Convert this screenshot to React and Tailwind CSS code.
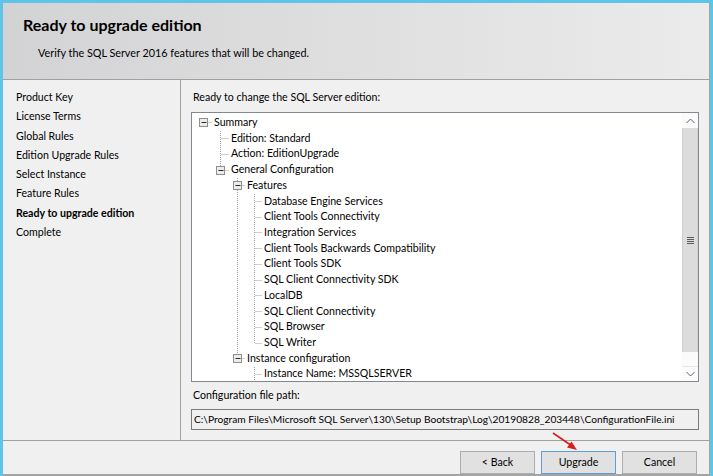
import React from 'react';

const rows = [
  { t: 'Summary', l: 0, e: true },
  { t: 'Edition: Standard', l: 1 },
  { t: 'Action: EditionUpgrade', l: 1 },
  { t: 'General Configuration', l: 1, e: true },
  { t: 'Features', l: 2, e: true },
  { t: 'Database Engine Services', l: 3 },
  { t: 'Client Tools Connectivity', l: 3 },
  { t: 'Integration Services', l: 3 },
  { t: 'Client Tools Backwards Compatibility', l: 3 },
  { t: 'Client Tools SDK', l: 3 },
  { t: 'SQL Client Connectivity SDK', l: 3 },
  { t: 'LocalDB', l: 3 },
  { t: 'SQL Client Connectivity', l: 3 },
  { t: 'SQL Browser', l: 3 },
  { t: 'SQL Writer', l: 3 },
  { t: 'Instance configuration', l: 2, e: true },
  { t: 'Instance Name: MSSQLSERVER', l: 3 },
];

const textPad = ['pl-[22px]', 'pl-[39px]', 'pl-[55px]', 'pl-[72px]'];
const TX = [22, 39, 55, 72];
const H = 15.73;
const TOP = 2;
const cy = (i) => Math.floor(TOP + H * i + H / 2) + 0.5;
const rowTop = (i) => Math.round(TOP + H * i);
const lx = (L) => 11.5 + 17 * L;

const navItems = [
  'Product Key',
  'License Terms',
  'Global Rules',
  'Edition Upgrade Rules',
  'Select Instance',
  'Feature Rules',
  'Ready to upgrade edition',
  'Complete',
];

function TreeLines() {
  const dot = { stroke: '#a0a0a0', strokeWidth: 1, strokeDasharray: '1 1', fill: 'none' };
  const verticals = [
    { x: lx(1), y1: rowTop(1), y2: cy(3) },
    { x: lx(2), y1: rowTop(4), y2: cy(15) },
    { x: lx(3), y1: rowTop(5), y2: cy(14) },
    { x: lx(3), y1: rowTop(16), y2: 268 },
  ];
  return (
    <svg className="absolute left-0 top-0" width="489" height="268" viewBox="0 0 489 268">
      {verticals.map((v, k) => (
        <line key={'v' + k} x1={v.x} y1={v.y1} x2={v.x} y2={v.y2} {...dot} />
      ))}
      {rows.map((r, i) => {
        const x0 = r.e ? lx(r.l) + 5 : lx(r.l) + 1;
        return <line key={'h' + i} x1={x0} y1={cy(i)} x2={TX[r.l] - 2} y2={cy(i)} {...dot} />;
      })}
      {rows.map((r, i) =>
        r.e ? (
          <g key={'b' + i}>
            <rect x={lx(r.l) - 4} y={cy(i) - 4} width="8" height="8" fill="#ececec" stroke="#8f8f8f" strokeWidth="1" />
            <line x1={lx(r.l) - 2} y1={cy(i)} x2={lx(r.l) + 3} y2={cy(i)} stroke="#2a2a2a" strokeWidth="1" />
          </g>
        ) : null
      )}
    </svg>
  );
}

function ScrollBar() {
  return (
    <div className="flex w-[16px] shrink-0 flex-col bg-[#fbfbfb]">
      <div className="flex h-[15px] items-center justify-center">
        <svg width="9" height="6" viewBox="0 0 9 6">
          <polyline points="0.5,5 4.5,1 8.5,5" fill="none" stroke="#606060" strokeWidth="1" />
        </svg>
      </div>
      <div className="flex h-[224px] items-center justify-center border-x border-[#cfcfcf] bg-[#dcdcdc]">
        <div className="flex flex-col gap-[1px]">
          <div className="h-[1px] w-[7px] bg-[#5a5a5a]" />
          <div className="h-[1px] w-[7px] bg-[#5a5a5a]" />
          <div className="h-[1px] w-[7px] bg-[#5a5a5a]" />
          <div className="h-[1px] w-[7px] bg-[#5a5a5a]" />
        </div>
      </div>
      <div className="h-[14px]" />
      <div className="flex h-[15px] items-center justify-center border-t border-[#e6e6e6]">
        <svg width="9" height="6" viewBox="0 0 9 6">
          <polyline points="0.5,1 4.5,5 8.5,1" fill="none" stroke="#606060" strokeWidth="1" />
        </svg>
      </div>
    </div>
  );
}

export default function App() {
  return (
    <div
      className="relative flex h-[476px] w-[713px] overflow-hidden bg-[#5ec4e8] pl-[3px] pr-[3px] pt-[3px] text-[10.6px] text-black"
      style={{ fontFamily: 'Lato, "Liberation Sans", sans-serif' }}
    >
      <div className="flex min-w-0 flex-1 flex-col border-b-2 border-r border-[#a4a4a4] bg-[#f0f0f0]">
        {/* Header */}
        <div className="flex h-[76px] flex-col bg-linear-to-r from-[#d3d3d5] to-[#ebebeb] pl-[20px]">
          <div className="mt-[12px] text-[16px] font-bold leading-[20px]">Ready to upgrade edition</div>
          <div className="mt-[10px] pl-[15px] text-[10.8px] leading-[16px]">
            Verify the SQL Server 2016 features that will be changed.
          </div>
        </div>
        <div className="h-px bg-[#a0a0a0]" />
        {/* Body */}
        <div className="flex h-[360px] min-w-0">
          <div className="flex w-[178px] shrink-0 flex-col border-r border-[#a0a0a0] pl-[13px] pt-[8px] leading-[19.3px]">
            {navItems.map((n) => (
              <div key={n} className={n === 'Ready to upgrade edition' ? 'font-bold' : ''}>
                {n}
              </div>
            ))}
          </div>
          <div className="flex min-w-0 flex-1 flex-col pl-[10px] pr-[10px] pt-[9px]">
            <div className="pl-[2px] leading-[16px]">Ready to change the SQL Server edition:</div>
            <div className="mt-[7px] flex h-[270px] border border-[#828790] bg-white">
              <div className="relative min-w-0 flex-1 overflow-hidden pt-[2px]">
                <TreeLines />
                {rows.map((r, i) => (
                  <div key={i} className={'relative flex h-[15.73px] items-center whitespace-nowrap ' + textPad[r.l]}>
                    {r.t}
                  </div>
                ))}
              </div>
              <ScrollBar />
            </div>
            <div className="mt-[5px] pl-[2px] leading-[16px]">Configuration file path:</div>
            <div className="mt-[6px] flex h-[21px] items-center overflow-hidden whitespace-nowrap border border-[#7a7a7a] bg-[#f0f0f0] pl-[2px] text-[10.2px]">
              C:\Program Files\Microsoft SQL Server\130\Setup Bootstrap\Log\20190828_203448\ConfigurationFile.ini
            </div>
          </div>
        </div>
        <div className="h-px bg-[#a0a0a0]" />
        {/* Footer */}
        <div className="flex h-[33px] justify-end gap-[6px] pr-[12px] pt-[10px]">
          <button className="h-[23px] w-[75px] border border-[#adadad] bg-[#e1e1e1]">&lt; Back</button>
          <button className="h-[23px] w-[75px] border border-[#5e9ed6] bg-[#e1e1e1]">Upgrade</button>
          <button className="h-[23px] w-[75px] border border-[#adadad] bg-[#e1e1e1]">Cancel</button>
        </div>
      </div>
      {/* red annotation arrow */}
      <svg className="absolute left-[548px] top-[428px]" width="34" height="26" viewBox="0 0 34 26">
        <line x1="5" y1="5" x2="24" y2="18" stroke="#d42020" strokeWidth="1.6" />
        <polygon points="29,22 19,19.5 23.5,13.5" fill="#d42020" />
      </svg>
    </div>
  );
}
